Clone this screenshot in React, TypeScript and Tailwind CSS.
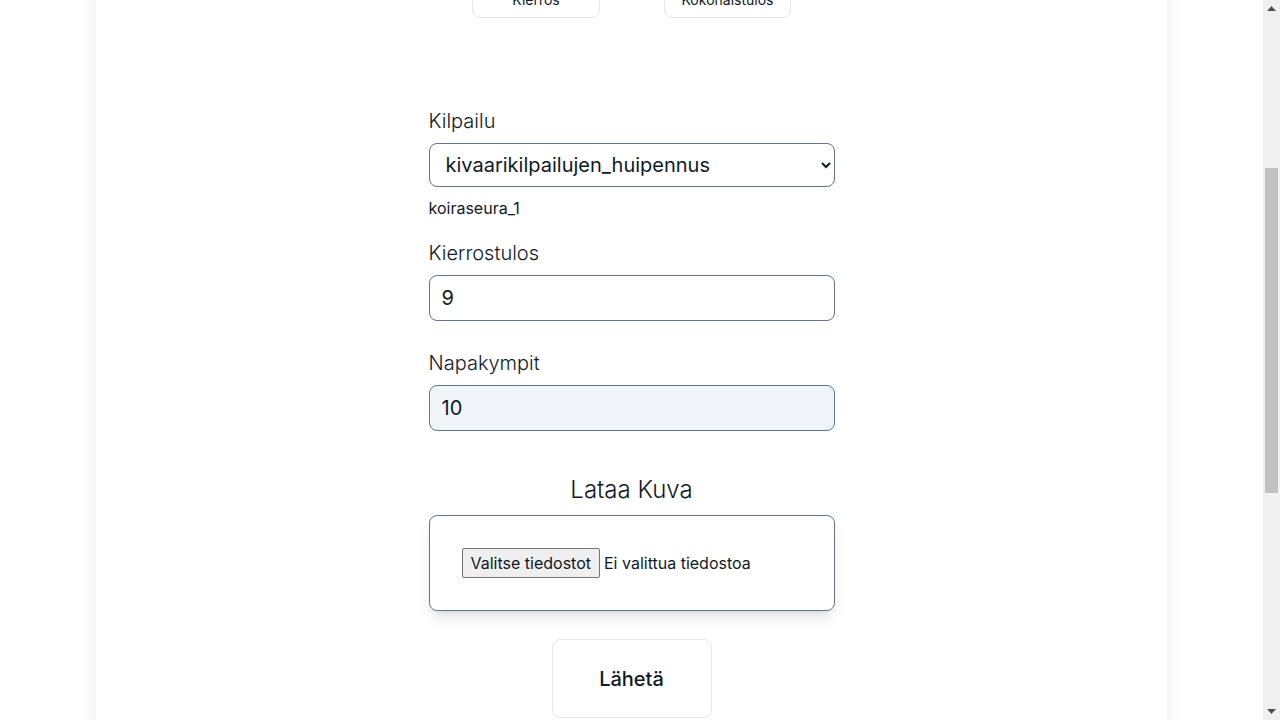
import { useLayoutEffect, useRef } from "react";

function ScrollBar() {
  return (
    <div className="flex h-full w-[17px] shrink-0 flex-col bg-[#f1f1f1]">
      <div className="flex h-[17px] items-center justify-center">
        <svg width="9" height="5" viewBox="0 0 9 5">
          <path d="M4.5 0 L9 5 L0 5 Z" fill="#505050" />
        </svg>
      </div>
      <div className="h-[151px]" />
      <div className="mx-[2px] h-[325px] bg-[#c1c1c1]" />
      <div className="flex-1" />
      <div className="flex h-[17px] items-center justify-center">
        <svg width="9" height="5" viewBox="0 0 9 5">
          <path d="M0 0 L9 0 L4.5 5 Z" fill="#505050" />
        </svg>
      </div>
    </div>
  );
}

function App() {
  const pageRef = useRef<HTMLDivElement>(null);

  // the reference is photographed part-way down the page
  useLayoutEffect(() => {
    if (pageRef.current) pageRef.current.scrollTop = 335;
  }, []);

  return (
    <div className="flex h-screen bg-white font-['Inter',sans-serif] text-gray-900">
      <div ref={pageRef} className="h-full flex-1 overflow-hidden">
        <div className="mx-auto w-[1071px] bg-white pb-[337px] shadow-[0_0_16px_rgba(0,0,0,0.08)]">
          {/* header, above the visible area */}
          <div className="flex h-[317px] flex-col items-center justify-center gap-4">
            <h1 className="text-3xl font-light">Tulokset</h1>
          </div>

          {/* tab buttons */}
          <div className="flex justify-center gap-16">
            <button className="h-[36px] w-[128px] rounded-lg border border-gray-200 text-sm">
              Kierros
            </button>
            <button className="h-[36px] w-[127px] rounded-lg border border-gray-200 text-sm">
              Kokonaistulos
            </button>
          </div>

          <form className="mx-auto mt-[89px] flex w-[406px] flex-col">
            <label className="text-xl font-light leading-7">Kilpailu</label>
            <select className="mt-[8px] h-[44px] w-full rounded-lg border border-slate-500 bg-white pl-[12px] pr-2 text-xl">
              <option>kivaarikilpailujen_huipennus</option>
            </select>
            <p className="mt-[9px] text-base leading-6">koiraseura_1</p>

            <label className="mt-[19px] text-xl font-light leading-7">Kierrostulos</label>
            <input
              readOnly
              value="9"
              className="mt-[8px] h-[46px] w-full rounded-lg border border-slate-500 bg-white px-3 text-xl outline-none"
            />

            <label className="mt-[28px] text-xl font-light leading-7">Napakympit</label>
            <input
              readOnly
              value="10"
              className="mt-[8px] h-[46px] w-full rounded-lg border border-slate-500 bg-slate-100 px-3 text-xl outline-none"
            />

            <h2 className="mt-[43px] text-center text-2xl font-light leading-8">Lataa Kuva</h2>
            <div className="mt-[9px] flex h-[96px] w-full items-center rounded-lg border border-slate-500 bg-white px-8 shadow-lg">
              <span className="rounded-[2px] border border-[#767676] bg-[#efefef] px-[8px] py-[2px] text-base leading-6">
                Valitse tiedostot
              </span>
              <span className="ml-1 text-base">Ei valittua tiedostoa</span>
            </div>

            <button
              type="button"
              className="mx-auto mt-[28px] h-[79px] w-[160px] rounded-lg border border-gray-200 bg-white text-xl font-medium"
            >
              Lähetä
            </button>
          </form>
        </div>
      </div>
      <ScrollBar />
    </div>
  );
}

export default App;
